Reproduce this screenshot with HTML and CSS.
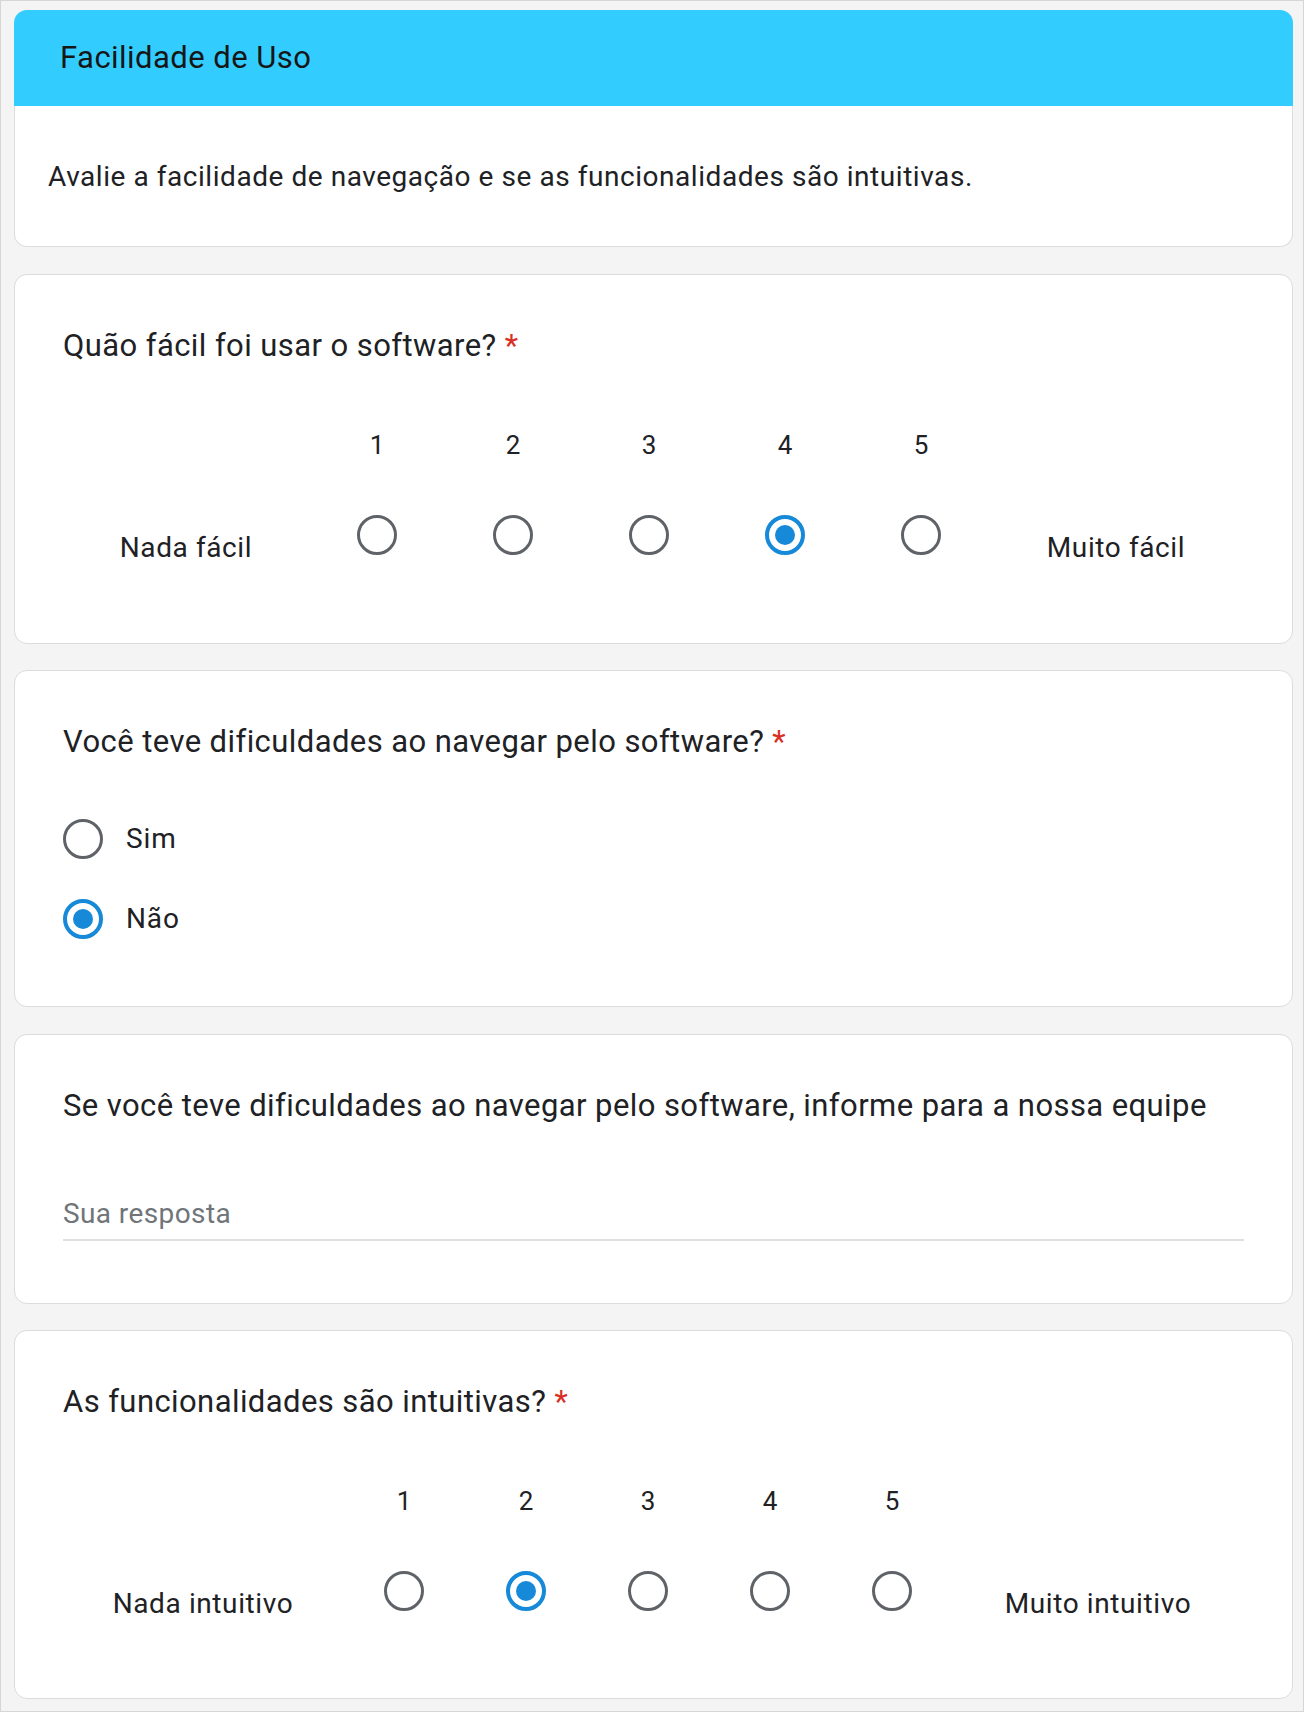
FILE: index.html
```html
<!DOCTYPE html>
<html lang="pt-BR">
<head>
<meta charset="utf-8">
<title>Facilidade de Uso</title>
<link rel="stylesheet" href="styles.css">
</head>
<body>
<div class="page">
  <section class="card section-card">
    <div class="section-head">Facilidade de Uso</div>
    <div class="section-body">Avalie a facilidade de navegação e se as funcionalidades são intuitivas.</div>
  </section>

  <section class="card question-card">
    <div class="question">Quão fácil foi usar o software? <span class="req">*</span></div>
    <div class="scale scale-short">
      <span class="scale-blank"></span>
      <span class="num">1</span><span class="num">2</span><span class="num">3</span><span class="num">4</span><span class="num">5</span>
      <span class="scale-blank"></span>
      <span class="scale-label">Nada fácil</span>
      <span class="cell"><span class="radio"></span></span>
      <span class="cell"><span class="radio"></span></span>
      <span class="cell"><span class="radio"></span></span>
      <span class="cell"><span class="radio checked"></span></span>
      <span class="cell"><span class="radio"></span></span>
      <span class="scale-label">Muito fácil</span>
    </div>
  </section>

  <section class="card question-card options-card">
    <div class="question">Você teve dificuldades ao navegar pelo software? <span class="req">*</span></div>
    <div class="options">
      <div class="option"><span class="radio"></span><span class="option-text">Sim</span></div>
      <div class="option"><span class="radio checked"></span><span class="option-text">Não</span></div>
    </div>
  </section>

  <section class="card question-card text-card">
    <div class="question">Se você teve dificuldades ao navegar pelo software, informe para a nossa equipe</div>
    <div class="answer">Sua resposta</div>
  </section>

  <section class="card question-card last-card">
    <div class="question">As funcionalidades são intuitivas? <span class="req">*</span></div>
    <div class="scale scale-long">
      <span class="scale-blank"></span>
      <span class="num">1</span><span class="num">2</span><span class="num">3</span><span class="num">4</span><span class="num">5</span>
      <span class="scale-blank"></span>
      <span class="scale-label">Nada intuitivo</span>
      <span class="cell"><span class="radio"></span></span>
      <span class="cell"><span class="radio checked"></span></span>
      <span class="cell"><span class="radio"></span></span>
      <span class="cell"><span class="radio"></span></span>
      <span class="cell"><span class="radio"></span></span>
      <span class="scale-label">Muito intuitivo</span>
    </div>
  </section>
</div>
</body>
</html>
```

FILE: styles.css
```css
* { box-sizing: border-box; }

html, body {
  margin: 0;
  padding: 0;
}

body {
  background: #f4f4f5;
  font-family: Roboto, "Noto Sans", "Liberation Sans", sans-serif;
  color: #202124;
}

.page {
  width: 1304px;
  min-height: 1712px;
  border: 1px solid #d6d6d8;
  padding: 9px 10px 10px 13px;
  display: flex;
  flex-direction: column;
  gap: 26.5px;
}

.card {
  background: #ffffff;
  border: 1px solid #dadce0;
  border-radius: 13px;
}

.section-card {
  border: none;
  background: transparent;
}

.section-head {
  height: 96px;
  background: #33ccff;
  border-radius: 13px 13px 0 0;
  display: flex;
  align-items: center;
  padding-left: 46px;
  font-size: 31px;
  line-height: 40px;
  letter-spacing: 0.45px;
  color: #161616;
}

.section-body {
  background: #ffffff;
  border: 1px solid #dadce0;
  border-top: none;
  border-radius: 0 0 13px 13px;
  padding: 53px 32px 51px 33px;
  font-size: 28px;
  line-height: 36px;
  letter-spacing: 0.55px;
}

.question-card {
  padding: 51px 48px 77px 48px;
}

.last-card {
  padding-bottom: 76px;
}

.question {
  font-size: 31px;
  line-height: 40px;
  letter-spacing: 0.42px;
}

.req {
  color: #d93025;
}

.scale {
  display: grid;
  margin-top: 63px;
  row-gap: 54px;
  align-items: start;
}

.scale-short {
  grid-template-columns: 246px repeat(5, 136px) 254px;
}

.scale-long {
  grid-template-columns: 280px repeat(5, 122px) 290px;
}

.num {
  text-align: center;
  font-size: 26px;
  line-height: 32px;
}

.cell {
  display: flex;
  justify-content: center;
}

.scale-label {
  text-align: center;
  font-size: 28px;
  line-height: 36px;
  letter-spacing: 0.6px;
  margin-top: 15px;
}

.radio {
  display: inline-flex;
  align-items: center;
  justify-content: center;
  width: 40px;
  height: 40px;
  flex: 0 0 40px;
  border-radius: 50%;
  border: 3px solid #5f6368;
}

.radio.checked {
  border: 4px solid #1689d9;
}

.radio.checked::after {
  content: "";
  width: 20px;
  height: 20px;
  border-radius: 50%;
  background: #1689d9;
}

.options-card {
  padding-bottom: 67px;
}

.options {
  margin-top: 57px;
  display: flex;
  flex-direction: column;
  gap: 40px;
}

.option {
  display: flex;
  align-items: center;
  gap: 23px;
  height: 40px;
}

.option-text {
  font-size: 28px;
  line-height: 36px;
  letter-spacing: 0.9px;
}

.text-card {
  padding-bottom: 62px;
}

.answer {
  margin-top: 70px;
  font-size: 28px;
  line-height: 36px;
  letter-spacing: 0.4px;
  color: #70757a;
  padding-bottom: 7px;
  border-bottom: 2px solid #e0e0e0;
}
```
